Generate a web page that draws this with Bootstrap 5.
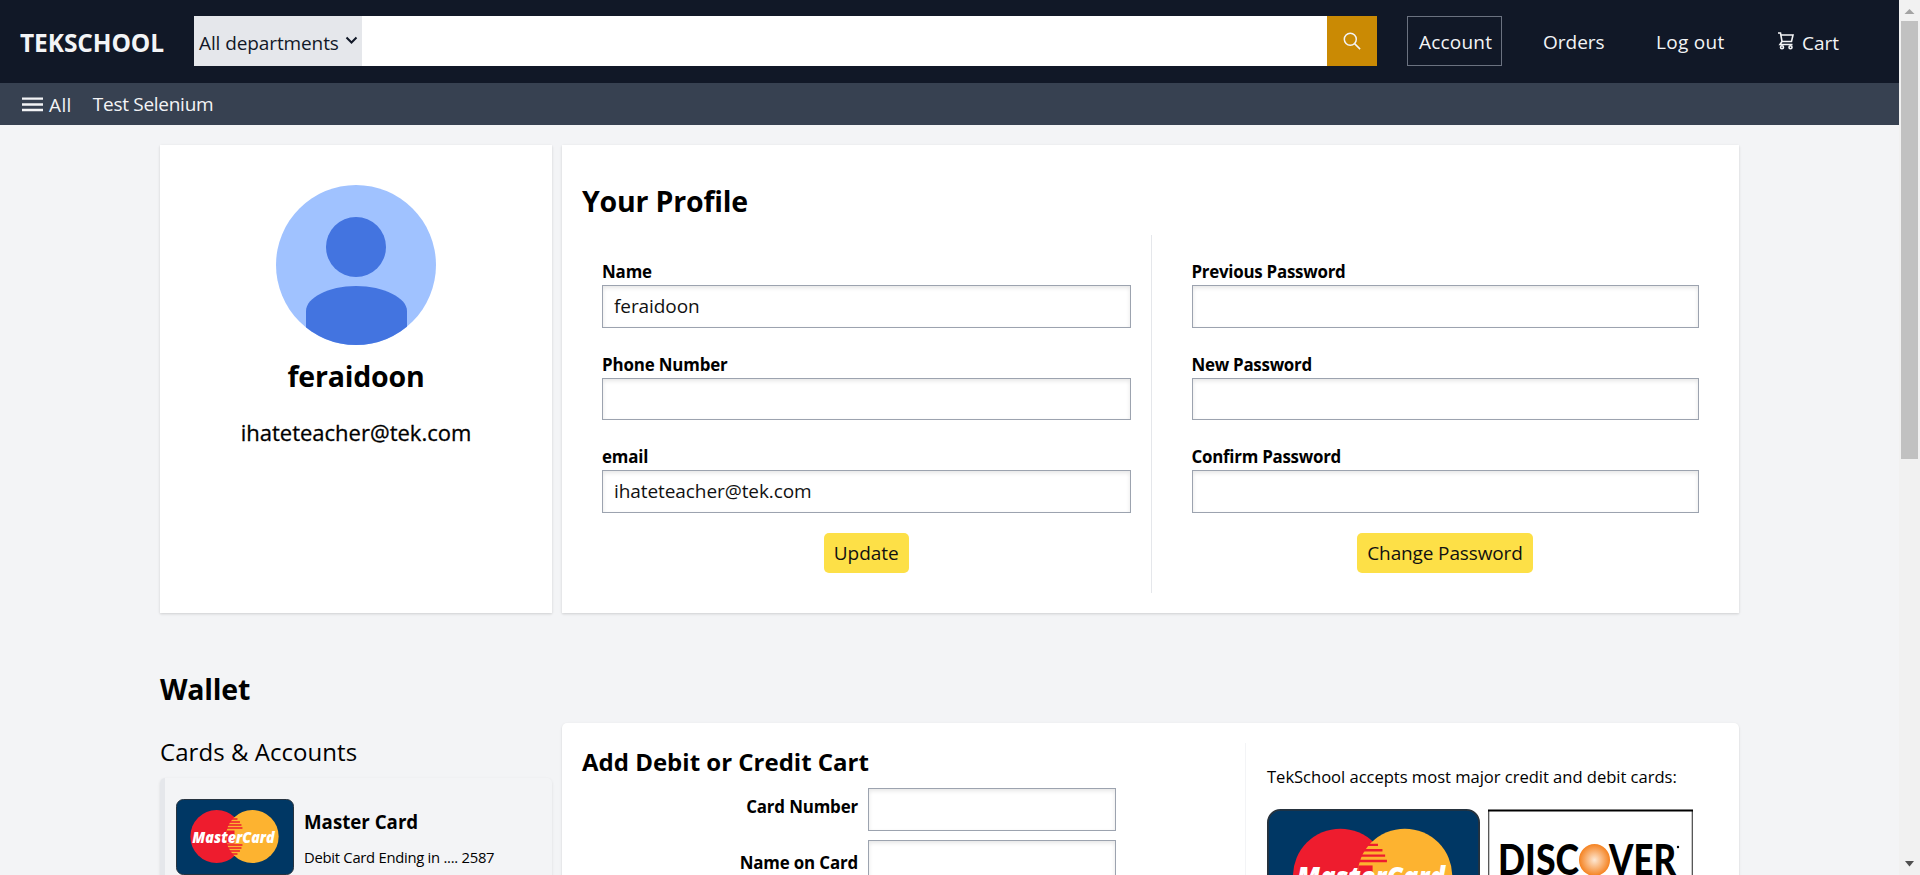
<!DOCTYPE html>
<html lang="en">
<head>
<meta charset="utf-8">
<title>TEKSCHOOL</title>
<link href="https://cdn.jsdelivr.net/npm/bootstrap@5.3.0/dist/css/bootstrap.min.css" rel="stylesheet">
<style>
html,body{height:875px;overflow:hidden}
body{font-family:"Open Sans","Noto Sans",sans-serif;font-size:19px;line-height:24px;color:#000;background:#f3f4f6}
.page{width:1899px;height:875px}
.topbar{height:83px;background:#111827;color:#f3f4f6;padding:16px 0 17px 20px}
.brand{width:174px;font-size:24.5px;font-weight:700;line-height:53px;letter-spacing:-.1px}
.dept{width:168px;background:#e5e7eb;color:#111827;padding:3px 0 0 5px;line-height:50px;letter-spacing:-.1px}
.dept svg{margin:-4px 0 0 6px}
.query{width:965px;height:50px;border:0;border-radius:0}
.go{width:50px;height:50px;background:#ca8a04;border-radius:0;padding:0}
.account{width:95px;height:50px;border:1px solid #6b7280;padding-left:11px;line-height:50px;margin-left:30px;letter-spacing:.2px}
.toplink{line-height:52px}
.orders{width:113px;margin-left:41px}
.logout{width:122px;letter-spacing:.3px}
.cart svg{margin-top:-1px}
.subbar{height:42px;background:#374151;color:#f3f4f6;padding-left:22px}
.all-link{margin:1px 0 0 6px;letter-spacing:.4px}
.sel-link{margin:-1px 0 0 21px;letter-spacing:-.28px}
.content{padding:20px 160px 0}
.cols{gap:10px}
.profile-row{height:468px}
.panel{background:#fff;box-shadow:0 1px 3px rgba(0,0,0,.1),0 1px 2px rgba(0,0,0,.06)}
.side{width:392px}
.wide{width:1177px}
.avatar-panel{padding-top:40px}
.profile-panel{padding:36px 0 0 20px}
.h-lg{font-size:28.5px;line-height:40px;font-weight:700;margin:0;letter-spacing:-.2px}
.h-md{font-size:24px;line-height:34px;margin:0;letter-spacing:.05px}
.user-name{margin-top:11px}
.mail{font-size:22px;line-height:30px;margin-top:21px;-webkit-text-stroke:.3px #000}
.forms{height:358px;margin-top:14px}
.lbl{font-size:16.9px;line-height:24px;font-weight:700;margin-bottom:1px;display:block;letter-spacing:-.15px}
.txt{height:42.5px;border:1px solid #9ca3af;border-radius:0;padding:0 11px;font-size:19px;color:#111;background:#fff;box-shadow:inset 0 2px 4px rgba(0,0,0,.1);letter-spacing:-.08px}
.field{margin-bottom:25px}
.field:last-of-type{margin-bottom:20px}
.btn-y{background:#fde047;height:40px;border-radius:5px;padding:1px 10px 0;font-size:19px;line-height:39px;border:0;color:#111}
.left-form{width:569.5px;border-right:1px solid #e5e7eb;padding:25px 20px 0}
.right-form{width:587px;padding:25px 40px 0}
.right-form .lbl{letter-spacing:-.25px}
.right-form .btn-y{letter-spacing:-.13px}
.wallet{margin-top:56px}
.wallet-row{margin-top:14px}
.cards-col{padding-top:12px}
.saved{height:140px;margin-top:9px;border-left:5px solid #e5e7eb;border-radius:5px;padding:21px 0 0 11px;box-shadow:0 1px 3px rgba(0,0,0,.1)}
.saved-text{margin:9px 0 0 10px}
.saved-name{line-height:28px;font-size:18.7px}
.saved-kind{font-size:14.8px;line-height:24px;margin-top:9px;letter-spacing:-.27px}
.addcard{border-radius:5px;height:240px;padding:20px 0 0 20px}
.card-form{width:663px}
.card-title{font-weight:700;padding-top:2px;height:45px;letter-spacing:0}
.pair{width:534px}
.pair .txt{width:248px}
.pair .lbl{margin:7px 10px 0 0}
.pair + .pair{margin-top:9.5px}
.pair + .pair .lbl{margin-top:11px}
.accepted{border-left:1px solid #f3f4f6;padding:22px 0 0 21px}
.accepted-note{font-size:16.6px;line-height:24px;letter-spacing:-.04px}
.brands{margin-top:20px;gap:8px}
.scroller{width:21px;height:875px;background:#f1f1f1}
.thumb{width:17px;height:438px;background:#c1c1c1}
</style>
</head>
<body class="d-flex">
<svg width="0" height="0" class="position-absolute"><defs>
<symbol id="mc" viewBox="0 0 119 77" preserveAspectRatio="none">
<rect x="0.5" y="0.5" width="118" height="75" rx="7" fill="#003764" stroke="#26323d"/>
<circle cx="41" cy="37.500" r="26.500" fill="#ee1c2e"/><circle cx="77" cy="37.500" r="26.500" fill="#fdb330"/>
<path d="M56 20h6M53.500 23h11M52 26h14M51 29h16M51 46h16M52 49h14M53.500 52h11M56 55h6" stroke="#ee1c2e" stroke-width="1.300"/>
<path d="M51 31.500h8v13h-8z" fill="#ee1c2e"/>
<text x="16.500" y="43.700" font-family="Open Sans" font-weight="800" font-style="italic" font-size="15.500" textLength="83" lengthAdjust="spacingAndGlyphs" fill="#fff">MasterCard</text>
</symbol></defs></svg>
<div class="page overflow-hidden flex-shrink-0">
 <header class="topbar d-flex">
  <div class="brand">TEKSCHOOL</div>
  <div class="dept d-flex align-items-center">All departments<svg width="13" height="9" viewBox="0 0 13 9"><path d="M1.500 1.500l5 5 5-5" fill="none" stroke="#111827" stroke-width="2"/></svg></div>
  <input class="query" type="text" aria-label="Search">
  <button class="btn go d-flex align-items-center justify-content-center" aria-label="Go"><svg width="18" height="18" viewBox="0 0 18 18" fill="none" stroke="#f3f4f6" stroke-width="1.500"><circle cx="7.300" cy="7.300" r="6"/><path d="M11.600 11.600l5.500 5.500"/></svg></button>
  <div class="account">Account</div>
  <div class="toplink orders">Orders</div>
  <div class="toplink logout">Log out</div>
  <div class="toplink cart d-flex align-items-center"><svg width="16" height="18" viewBox="0 0 16 18" fill="none" stroke="#f3f4f6" stroke-width="1.600"><path d="M0 1H2.500L4 9.500H13.500L15 3H3M4 9.500L2 12.500H14.500"/><circle cx="4" cy="15.300" r="1.500"/><circle cx="12.500" cy="15.300" r="1.500"/></svg><span class="ms-2 pt-1">Cart</span></div>
 </header>
 <nav class="subbar d-flex align-items-center"><svg width="21" height="15" viewBox="0 0 21 15" stroke="#f3f4f6" stroke-width="2.300"><path d="M0 1.700h21M0 7.500h21M0 13h21"/></svg><span class="all-link">All</span><span class="sel-link">Test Selenium</span></nav>
 <main class="content">
  <div class="d-flex cols profile-row">
   <section class="panel side avatar-panel text-center">
    <svg class="d-block mx-auto" width="160" height="160" viewBox="0 0 160 160"><clipPath id="c"><circle cx="80" cy="80" r="80"/></clipPath><g clip-path="url(#c)"><rect width="160" height="160" fill="#a0c2ff"/><circle cx="80" cy="62" r="30" fill="#4374e0"/><path d="M30 160V126C30 113 52 101 80 101s51 12 51 25v34z" fill="#4374e0"/></g></svg>
    <h1 class="h-lg user-name">feraidoon</h1>
    <p class="mail">ihateteacher@tek.com</p>
   </section>
   <section class="panel wide profile-panel">
    <h2 class="h-lg">Your Profile</h2>
    <div class="forms d-flex">
     <form class="left-form">
      <div class="field"><label class="lbl" for="n">Name</label><input id="n" class="form-control txt" value="feraidoon"></div>
      <div class="field"><label class="lbl" for="p">Phone Number</label><input id="p" class="form-control txt"></div>
      <div class="field"><label class="lbl" for="e">email</label><input id="e" class="form-control txt" value="ihateteacher@tek.com"></div>
      <button type="button" class="btn btn-y d-block mx-auto">Update</button>
     </form>
     <form class="right-form">
      <div class="field"><label class="lbl" for="pp">Previous Password</label><input id="pp" class="form-control txt" type="password"></div>
      <div class="field"><label class="lbl" for="np">New Password</label><input id="np" class="form-control txt" type="password"></div>
      <div class="field"><label class="lbl" for="cp">Confirm Password</label><input id="cp" class="form-control txt" type="password"></div>
      <button type="button" class="btn btn-y d-block mx-auto">Change Password</button>
     </form>
    </div>
   </section>
  </div>
  <h2 class="h-lg wallet">Wallet</h2>
  <div class="d-flex cols wallet-row">
   <section class="side cards-col">
    <h3 class="h-md fw-normal">Cards &amp; Accounts</h3>
    <div class="saved d-flex"><svg width="118" height="77" class="flex-shrink-0"><use href="#mc"/></svg>
     <div class="saved-text"><div class="saved-name fw-bold">Master Card</div><div class="saved-kind">Debit Card Ending in .... 2587</div></div></div>
   </section>
   <section class="panel wide addcard d-flex">
    <div class="card-form">
     <h3 class="h-md card-title">Add Debit or Credit Cart</h3>
     <div class="pair d-flex justify-content-end"><label class="lbl" for="cn">Card Number</label><input id="cn" class="form-control txt"></div>
     <div class="pair d-flex justify-content-end"><label class="lbl" for="nc">Name on Card</label><input id="nc" class="form-control txt"></div>
    </div>
    <div class="accepted">
     <div class="accepted-note">TekSchool accepts most major credit and debit cards:</div>
     <div class="d-flex brands"><svg width="213" height="138"><use href="#mc"/></svg>
      <svg width="205" height="138" viewBox="0 0 205 138"><rect x=".75" y="1.500" width="203.500" height="135" fill="#fff" stroke="#222"/><path d="M0 1.500h205" stroke="#000" stroke-width="2"/><radialGradient id="g"><stop stop-color="#fde8d4"/><stop offset="1" stop-color="#f58220"/></radialGradient><g font-family="Lato" font-weight="900" font-size="42"><text x="10" y="66" textLength="81" lengthAdjust="spacingAndGlyphs">DISC</text><text x="121" y="66" textLength="67" lengthAdjust="spacingAndGlyphs">VER</text></g><ellipse cx="106.500" cy="51" rx="15.500" ry="16" fill="url(#g)"/><circle cx="190" cy="38" r="1.200"/></svg></div>
    </div>
   </section>
  </div>
 </main>
</div>
<div class="scroller d-flex flex-column align-items-center flex-shrink-0">
 <svg width="21" height="21"><path d="M5.500 14h10l-5-5z" fill="#a3a3a3"/></svg><div class="thumb"></div>
 <svg class="mt-auto" width="21" height="21"><path d="M6 7h9l-4.500 5.500z" fill="#505050"/></svg>
</div>
<script src="https://cdn.jsdelivr.net/npm/bootstrap@5.3.0/dist/js/bootstrap.bundle.min.js"></script>
</body>
</html>
